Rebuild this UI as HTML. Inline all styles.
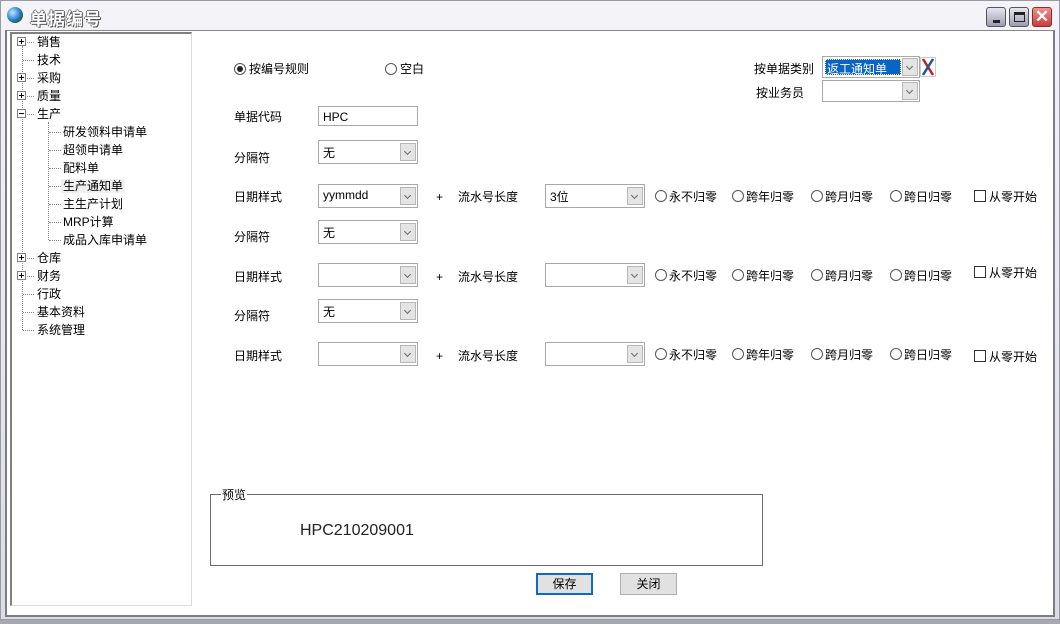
<!DOCTYPE html>
<html><head><meta charset="utf-8"><style>
*{margin:0;padding:0;box-sizing:border-box}
body{width:1060px;height:624px;overflow:hidden;background:#a8a8b0;font-family:"Liberation Sans","Noto Sans CJK SC",sans-serif;font-size:12px;color:#000;position:relative}
.a{position:absolute}
#win{left:0;top:0;width:1060px;height:620px;background:linear-gradient(#f4f4f8,#dcdce4);border:1px solid #9a9aa4}
#title{left:30px;top:5px;font-size:17px;font-weight:bold;color:#fff;text-shadow:1px 1px 0 #555,-1px 0 0 #777,0 -1px 0 #777,1px 0 0 #777;letter-spacing:1px}
#client{left:5px;top:30px;width:1050px;height:587px;background:#fff;border:2px solid #7c7c88;border-top:1px solid #888}
#tree{left:10px;top:32px;width:182px;height:574px;border-left:2px solid #808080;border-top:2px solid #808080;border-right:1px solid #ddd;border-bottom:1px solid #ddd;background:#fff}
.t{position:absolute;font-size:12px;line-height:14px;white-space:nowrap}
.pb{position:absolute;width:9px;height:9px;border:1px solid #808080;background:#fff}
.pb:before{content:"";position:absolute;left:1px;top:3px;width:5px;height:1px;background:#000}
.pb.p:after{content:"";position:absolute;left:3px;top:1px;width:1px;height:5px;background:#000}
.dh{position:absolute;height:1px;border-top:1px dotted #888}
.dv{position:absolute;width:1px;border-left:1px dotted #888}
.lbl{position:absolute;font-size:12px;white-space:nowrap;line-height:14px}
.cb{position:absolute;width:100px;height:24px;border:1px solid #a8a8a8;background:#fff;font-size:12px;padding:3px 0 0 4px}
.cb .bt{position:absolute;right:1px;top:2px;width:16px;height:18px;background:#e4e4e4;border:1px solid #b8b8b8}
.cb .bt:after{content:"";position:absolute;left:4px;top:5px;width:4px;height:4px;border-right:1px solid #666;border-bottom:1px solid #666;transform:rotate(45deg)}
.rd{position:absolute;width:12px;height:12px;border:1px solid #555;border-radius:50%;background:#fff}
.rd.on:after{content:"";position:absolute;left:2px;top:2px;width:6px;height:6px;border-radius:50%;background:#222}
.ck{position:absolute;width:12px;height:12px;border:1px solid #333;background:#fff}
.btn{position:absolute;width:57px;height:22px;background:#e1e1e1;border:1px solid #adadad;text-align:center;line-height:20px;font-size:12px}
</style></head><body>
<div id="win" class="a"></div>
<div class="a" style="left:7px;top:7px;width:16px;height:16px;border-radius:50%;background:radial-gradient(circle at 35% 35%,#bfe8ff,#2b7fd0 50%,#1a5a20 80%);"></div>
<div id="title" class="a">单据编号</div>
<div class="a" style="left:986px;top:7px;width:20px;height:20px;border:1px solid #555;border-radius:3px;background:linear-gradient(#e6e6f0,#9c9cb0)"><div class="a" style="left:6px;top:12px;width:7px;height:3px;background:#222"></div></div>
<div class="a" style="left:1009px;top:7px;width:20px;height:20px;border:1px solid #555;border-radius:3px;background:linear-gradient(#e6e6f0,#9c9cb0)"><div class="a" style="left:4px;top:4px;width:11px;height:10px;border:1px solid #222;border-top:3px solid #222"></div></div>
<div class="a" style="left:1032px;top:7px;width:20px;height:20px;border:1px solid #8a3030;border-radius:3px;background:linear-gradient(#f09090,#c83c3c);color:#fff;font-size:17px;line-height:18px;text-align:center;font-weight:bold">✕</div>
<div id="client" class="a"></div>
<div id="tree" class="a"></div>
<!-- tree -->
<div class="dv" style="left:22px;top:46px;height:284px"></div>
<div class="dv" style="left:48px;top:122px;height:118px"></div>
<div class="pb p" style="left:17px;top:37px"></div><div class="dh" style="left:27px;top:42px;width:7px"></div><div class="t" style="left:37px;top:35px">销售</div>
<div class="dh" style="left:23px;top:60px;width:11px"></div><div class="t" style="left:37px;top:53px">技术</div>
<div class="pb p" style="left:17px;top:73px"></div><div class="dh" style="left:27px;top:78px;width:7px"></div><div class="t" style="left:37px;top:71px">采购</div>
<div class="pb p" style="left:17px;top:91px"></div><div class="dh" style="left:27px;top:96px;width:7px"></div><div class="t" style="left:37px;top:89px">质量</div>
<div class="pb" style="left:17px;top:109px"></div><div class="dh" style="left:27px;top:114px;width:7px"></div><div class="t" style="left:37px;top:107px">生产</div>
<div class="dh" style="left:49px;top:132px;width:12px"></div><div class="t" style="left:63px;top:125px">研发领料申请单</div>
<div class="dh" style="left:49px;top:150px;width:12px"></div><div class="t" style="left:63px;top:143px">超领申请单</div>
<div class="dh" style="left:49px;top:168px;width:12px"></div><div class="t" style="left:63px;top:161px">配料单</div>
<div class="dh" style="left:49px;top:186px;width:12px"></div><div class="t" style="left:61px;top:179px;background:#f0f0f0;padding:0 2px">生产通知单</div>
<div class="dh" style="left:49px;top:204px;width:12px"></div><div class="t" style="left:63px;top:197px">主生产计划</div>
<div class="dh" style="left:49px;top:222px;width:12px"></div><div class="t" style="left:63px;top:215px">MRP计算</div>
<div class="dh" style="left:49px;top:240px;width:12px"></div><div class="t" style="left:63px;top:233px">成品入库申请单</div>
<div class="pb p" style="left:17px;top:253px"></div><div class="dh" style="left:27px;top:258px;width:7px"></div><div class="t" style="left:37px;top:251px">仓库</div>
<div class="pb p" style="left:17px;top:271px"></div><div class="dh" style="left:27px;top:276px;width:7px"></div><div class="t" style="left:37px;top:269px">财务</div>
<div class="dh" style="left:23px;top:294px;width:11px"></div><div class="t" style="left:37px;top:287px">行政</div>
<div class="dh" style="left:23px;top:312px;width:11px"></div><div class="t" style="left:37px;top:305px">基本资料</div>
<div class="dh" style="left:23px;top:330px;width:11px"></div><div class="t" style="left:37px;top:323px">系统管理</div>
<!-- top radios -->
<div class="rd on" style="left:234px;top:63px"></div><div class="lbl" style="left:249px;top:62px">按编号规则</div>
<div class="rd" style="left:385px;top:63px"></div><div class="lbl" style="left:400px;top:62px">空白</div>
<div class="lbl" style="left:754px;top:62px">按单据类别</div>
<div class="cb" style="left:822px;top:56px;width:98px;height:22px"><div class="a" style="left:2px;top:2px;width:76px;height:16px;background:#0a64c8;color:#fff;padding:1px 2px;outline:1px dotted #fff;outline-offset:-1px">返工通知单</div><div class="bt" style="top:1px"></div></div>
<svg class="a" style="left:920px;top:57px" width="16" height="20" viewBox="0 0 16 20"><path d="M3 2 L13 18" stroke="#c02020" stroke-width="2.5"/><path d="M13 2 L3 18" stroke="#2050a0" stroke-width="2.5"/><rect x="0.5" y="0.5" width="15" height="19" fill="none" stroke="#ccc"/></svg>
<div class="lbl" style="left:756px;top:86px">按业务员</div>
<div class="cb" style="left:822px;top:80px;width:98px;height:22px"><div class="bt" style="top:1px"></div></div>
<!-- form -->
<div class="lbl" style="left:234px;top:110px">单据代码</div>
<div class="a" style="left:318px;top:106px;width:100px;height:20px;border:1px solid #a8a8a8;padding:3px 0 0 4px">HPC</div>
<div class="lbl" style="left:234px;top:151px">分隔符</div><div class="cb" style="left:318px;top:140px">无<div class="bt"></div></div>
<div class="lbl" style="left:234px;top:190px">日期样式</div><div class="cb" style="left:318px;top:184px">yymmdd<div class="bt"></div></div>
<div class="lbl" style="left:436px;top:190px">+</div><div class="lbl" style="left:458px;top:190px">流水号长度</div>
<div class="cb" style="left:545px;top:184px">3位<div class="bt"></div></div>
<div class="lbl" style="left:234px;top:230px">分隔符</div><div class="cb" style="left:318px;top:220px">无<div class="bt"></div></div>
<div class="lbl" style="left:234px;top:270px">日期样式</div><div class="cb" style="left:318px;top:263px"><div class="bt"></div></div>
<div class="lbl" style="left:436px;top:270px">+</div><div class="lbl" style="left:458px;top:270px">流水号长度</div>
<div class="cb" style="left:545px;top:263px"><div class="bt"></div></div>
<div class="lbl" style="left:234px;top:309px">分隔符</div><div class="cb" style="left:318px;top:299px">无<div class="bt"></div></div>
<div class="lbl" style="left:234px;top:349px">日期样式</div><div class="cb" style="left:318px;top:342px"><div class="bt"></div></div>
<div class="lbl" style="left:436px;top:349px">+</div><div class="lbl" style="left:458px;top:349px">流水号长度</div>
<div class="cb" style="left:545px;top:342px"><div class="bt"></div></div>
<!-- radio rows -->
<div class="rd" style="left:655px;top:190px"></div><div class="lbl" style="left:669px;top:190px">永不归零</div>
<div class="rd" style="left:732px;top:190px"></div><div class="lbl" style="left:746px;top:190px">跨年归零</div>
<div class="rd" style="left:811px;top:190px"></div><div class="lbl" style="left:825px;top:190px">跨月归零</div>
<div class="rd" style="left:890px;top:190px"></div><div class="lbl" style="left:904px;top:190px">跨日归零</div>
<div class="ck" style="left:974px;top:190px"></div><div class="lbl" style="left:989px;top:190px">从零开始</div>
<div class="rd" style="left:655px;top:269px"></div><div class="lbl" style="left:669px;top:269px">永不归零</div>
<div class="rd" style="left:732px;top:269px"></div><div class="lbl" style="left:746px;top:269px">跨年归零</div>
<div class="rd" style="left:811px;top:269px"></div><div class="lbl" style="left:825px;top:269px">跨月归零</div>
<div class="rd" style="left:890px;top:269px"></div><div class="lbl" style="left:904px;top:269px">跨日归零</div>
<div class="ck" style="left:974px;top:266px"></div><div class="lbl" style="left:989px;top:266px">从零开始</div>
<div class="rd" style="left:655px;top:348px"></div><div class="lbl" style="left:669px;top:348px">永不归零</div>
<div class="rd" style="left:732px;top:348px"></div><div class="lbl" style="left:746px;top:348px">跨年归零</div>
<div class="rd" style="left:811px;top:348px"></div><div class="lbl" style="left:825px;top:348px">跨月归零</div>
<div class="rd" style="left:890px;top:348px"></div><div class="lbl" style="left:904px;top:348px">跨日归零</div>
<div class="ck" style="left:974px;top:350px"></div><div class="lbl" style="left:989px;top:350px">从零开始</div>
<!-- preview -->
<div class="a" style="left:210px;top:494px;width:553px;height:72px;border:1px solid #6a6a6a"></div>
<div class="lbl" style="left:221px;top:488px;background:#fff;padding:0 1px">预览</div>
<div class="a" style="left:300px;top:522px;font-size:16px;color:#222">HPC210209001</div>
<div class="btn" style="left:536px;top:573px;border:2px solid #0a6cc8;line-height:18px">保存</div>
<div class="btn" style="left:620px;top:573px">关闭</div>
</body></html>
